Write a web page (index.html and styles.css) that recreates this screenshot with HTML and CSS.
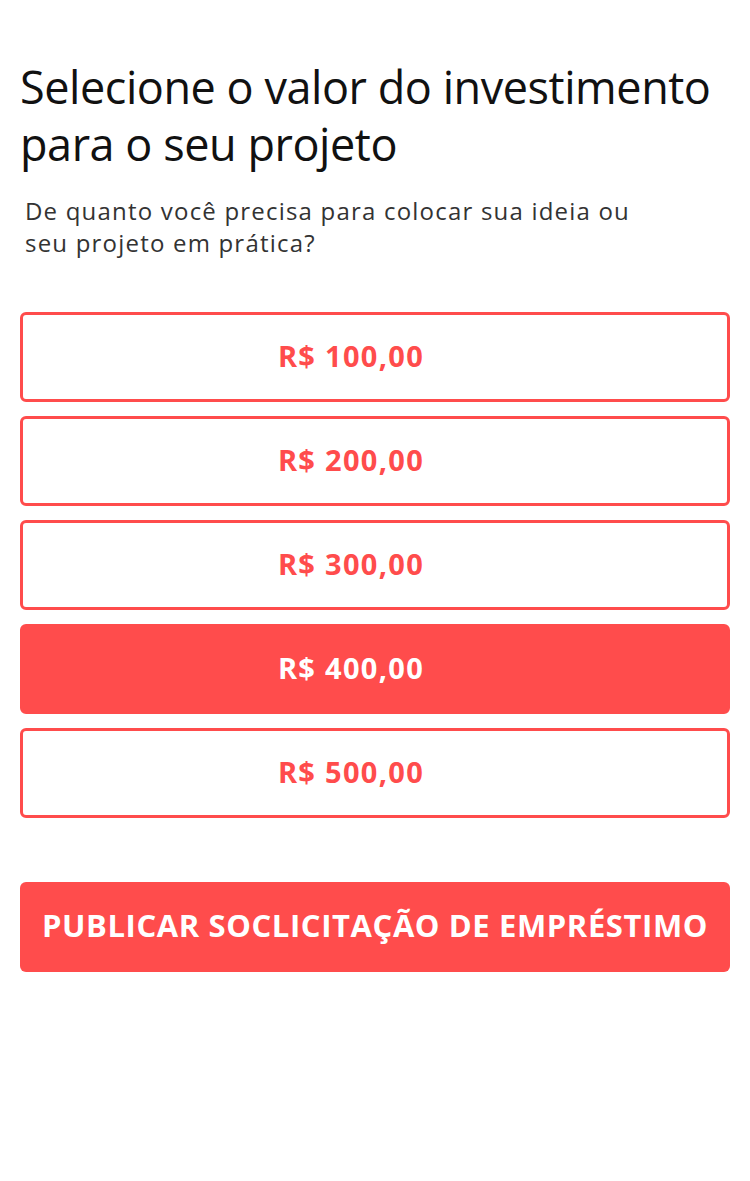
FILE: index.html
```html
<!DOCTYPE html>
<html lang="pt-BR">
<head>
<meta charset="utf-8">
<link rel="stylesheet" href="styles.css">
</head>
<body>
<main class="page">
  <h1 class="title">Selecione o valor do investimento para o seu projeto</h1>
  <p class="subtitle">De quanto você precisa para colocar sua ideia ou seu projeto em prática?</p>
  <div class="options">
    <button class="option">R$ 100,00</button>
    <button class="option">R$ 200,00</button>
    <button class="option">R$ 300,00</button>
    <button class="option selected">R$ 400,00</button>
    <button class="option">R$ 500,00</button>
  </div>
  <button class="publish">PUBLICAR SOCLICITAÇÃO DE EMPRÉSTIMO</button>
</main>
</body>
</html>
```
FILE: styles.css
```css
html, body {
  margin: 0;
  padding: 0;
  background: #fff;
}
body {
  font-family: "Open Sans", "Noto Sans", sans-serif;
}
.page {
  padding: 58px 20px 0 20px;
  display: flex;
  flex-direction: column;
}
.title {
  margin: 0;
  font-size: 45px;
  font-weight: 400;
  line-height: 57px;
  color: #111;
  letter-spacing: -0.45px;
}
.subtitle {
  margin: 23px 0 0 5px;
  font-size: 24px;
  line-height: 32px;
  color: #333;
  letter-spacing: 1.2px;
  max-width: 640px;
}
.options {
  margin-top: 53px;
  display: flex;
  flex-direction: column;
  gap: 14px;
}
.option {
  height: 90px;
  border: 3px solid #ff4c4c;
  border-radius: 6px;
  background: #fff;
  color: #ff4c4c;
  font-family: inherit;
  font-size: 29px;
  font-weight: 700;
  letter-spacing: 1.3px;
  padding: 0 48px 4px 0;
}
.option.selected {
  background: #ff4c4c;
  color: #fff;
}
.publish {
  margin-top: 64px;
  height: 90px;
  border: none;
  border-radius: 6px;
  background: #ff4c4c;
  color: #fff;
  font-family: inherit;
  font-size: 31px;
  font-weight: 700;
  letter-spacing: 0.6px;
  padding: 0 0 4px 0;
}
```
